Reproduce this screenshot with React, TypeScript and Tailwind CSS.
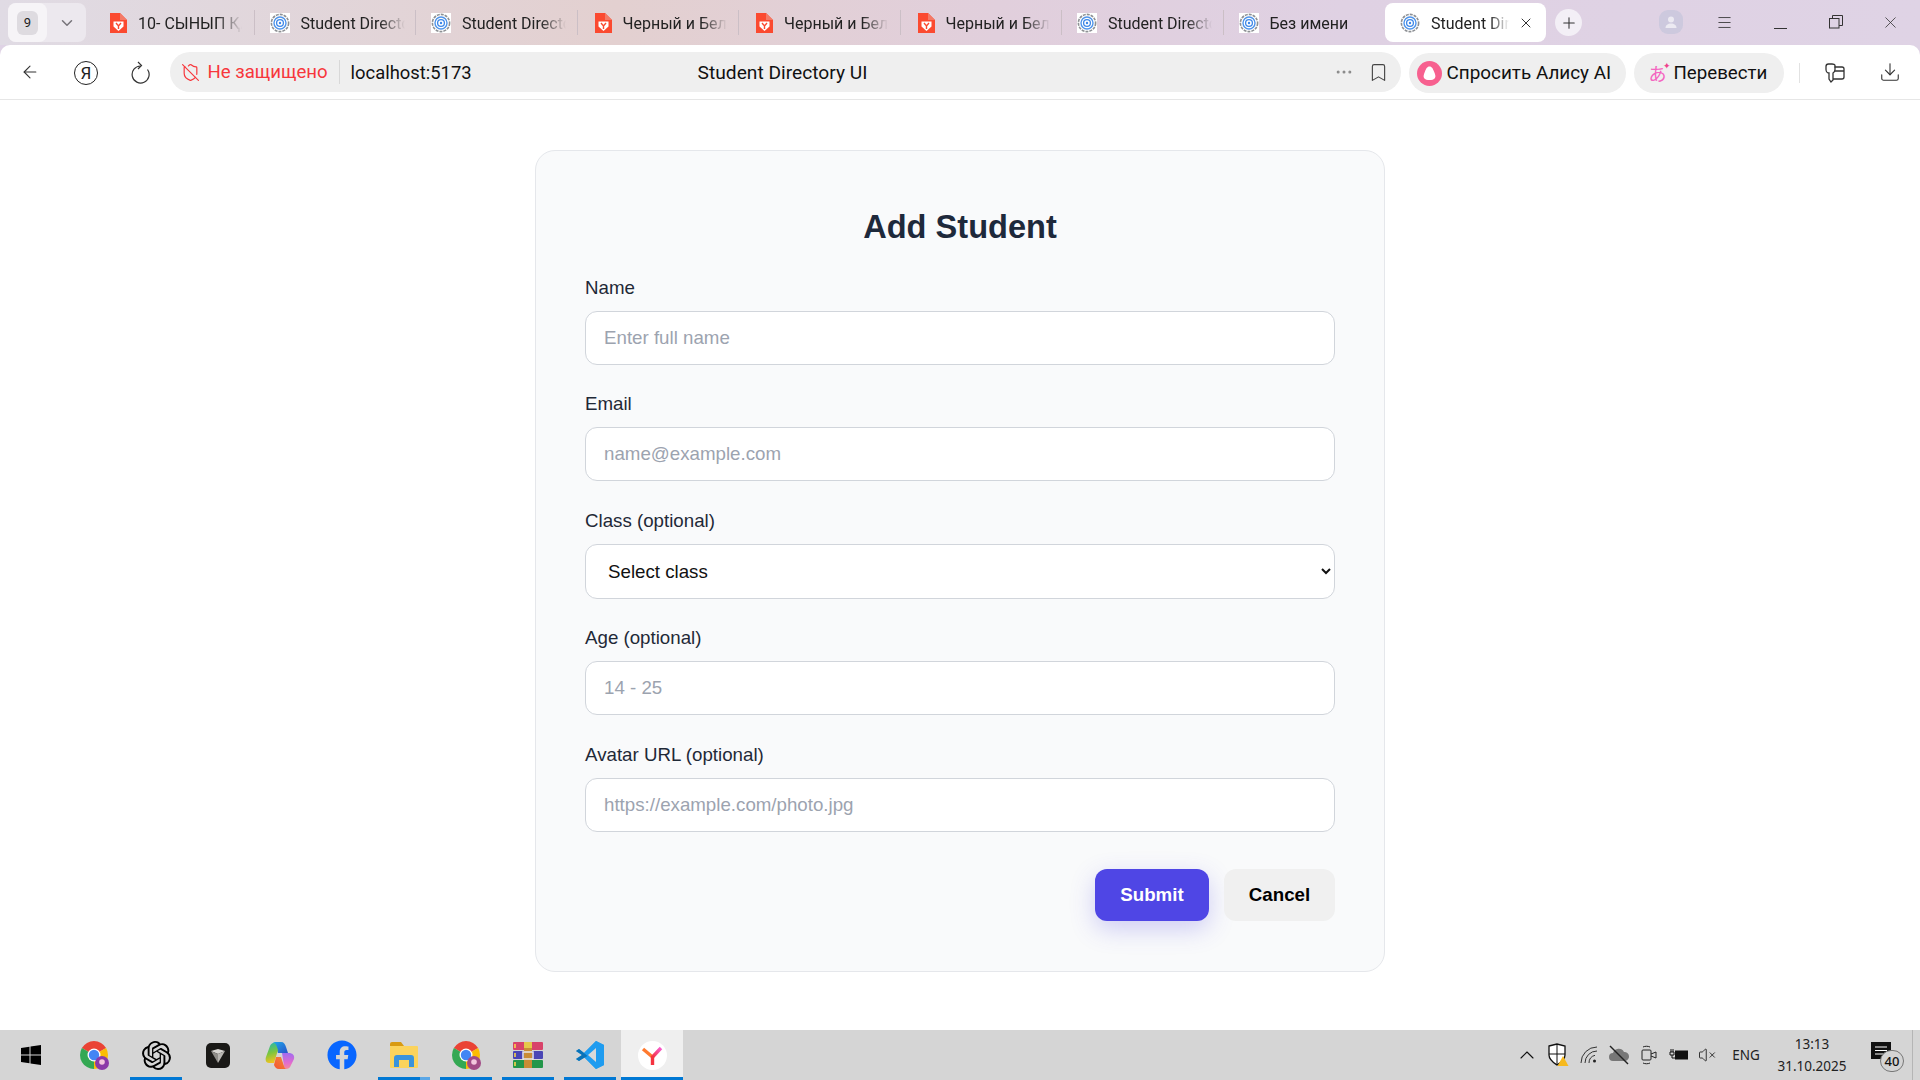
import React from "react";
import {
  ArrowLeft,
  Bookmark,
  ChevronDown,
  ChevronUp,
  Download,
  Menu,
  MoreHorizontal,
  Plus,
  ShieldOff,
  VolumeX,
  X,
} from "lucide-react";
import { FaFacebook } from "react-icons/fa";
import { SiOpenai } from "react-icons/si";

const DocIcon = () => (
  <svg width="17" height="20" viewBox="0 0 17 20" className="ml-px mr-px shrink-0">
    <path d="M0 0h10l7 7v13H0z" fill="#fb4a30" />
    <path d="M10 0l7 7h-7z" fill="#f47a66" />
    <path d="M3.500 8.500h10v5L8.500 18l-5-4.500z" fill="#fff" />
    <path d="M6 10l2.500 3 2.500-3M8.500 13v3" stroke="#fb4a30" strokeWidth="1.400" fill="none" />
  </svg>
);

const AppIcon = () => (
  <svg width="20" height="20" viewBox="0 0 20 20" className="-ml-px mr-px shrink-0">
    <rect width="20" height="20" fill="#fff" />
    <circle cx="10" cy="10" r="8.600" fill="none" stroke="#8d9094" strokeWidth="1.600" strokeDasharray="3 1" />
    <circle cx="10" cy="10" r="6" fill="none" stroke="#4f94ea" strokeWidth="1.400" />
    <circle cx="10" cy="10" r="3.400" fill="none" stroke="#3d87e8" strokeWidth="1.300" />
    <circle cx="10" cy="10" r="1.200" fill="#3d87e8" />
  </svg>
);

const tabs = [
  { title: "10- СЫНЫП ҚАЗАҚ", doc: true },
  { title: "Student Directory UI", doc: false },
  { title: "Student Directory UI", doc: false },
  { title: "Черный и Белый", doc: true },
  { title: "Черный и Белый", doc: true },
  { title: "Черный и Белый", doc: true },
  { title: "Student Directory UI", doc: false },
  { title: "Без имени", doc: false },
];

const TabStrip = () => (
  <div className="flex h-[45px] items-start bg-[linear-gradient(90deg,#e0dbe4_0%,#e3d0d0_32%,#e1cfdc_52%,#dfd1e3_70%,#dfd3e5_100%)]">
    <div className="ml-2 mt-[3px] flex h-[39px] w-[78px] rounded-lg bg-[#ece8ee]">
      <div className="flex w-[39px] items-center justify-center rounded-lg bg-[#f6f4f7]">
        <span className="flex h-[24px] w-[21px] items-center justify-center rounded-md bg-[#dedbe0] text-[13px] text-[#222]">9</span>
      </div>
      <div className="flex flex-1 items-center justify-center text-[#77747a]">
        <ChevronDown size={18} />
      </div>
    </div>
    <div className="ml-[7px] flex">
      {tabs.map((tab, i) => (
        <div
          key={i}
          className={
            "mt-[10px] flex h-[25px] w-[161.5px] items-center gap-[10px] border-r pl-[16px] text-[16px] text-[#222] " +
            (i === 7 ? "border-transparent" : "border-[#cbbfc6]")
          }
        >
          {tab.doc ? <DocIcon /> : <AppIcon />}
          <span className="w-[104px] translate-y-[1px] overflow-hidden whitespace-nowrap [mask-image:linear-gradient(90deg,#000_75%,transparent)]">
            {tab.title}
          </span>
        </div>
      ))}
    </div>
    <div className="mt-[3px] flex h-[39px] w-[161px] items-center rounded-lg bg-white pl-[16px] text-[16px] text-[#222]">
      <AppIcon />
      <span className="ml-[10px] w-[78px] translate-y-[1px] overflow-hidden whitespace-nowrap [mask-image:linear-gradient(90deg,#000_75%,transparent)]">
        Student Directory UI
      </span>
      <X size={16} strokeWidth={1.4} className="ml-[9px]" />
    </div>
    <div className="ml-[9px] mt-[9px] flex h-[27px] w-[27px] items-center justify-center rounded-full bg-[#f3eff6] text-[#333]">
      <Plus size={18} strokeWidth={1.4} />
    </div>
    <div className="ml-[77px] mt-[10px] flex h-[24px] w-[24px] items-center justify-center rounded-[9px] bg-[#cdc9de]">
      <svg width="14" height="14" viewBox="0 0 14 14" fill="#eceaf2">
        <circle cx="7" cy="4.500" r="3" />
        <path d="M1.500 13c0-3 2.500-4.500 5.500-4.500s5.500 1.500 5.500 4.500z" />
      </svg>
    </div>
    <div className="ml-[31px] mt-[12px] flex h-[20px] w-[20px] items-center justify-center text-[#333]">
      <Menu size={17} strokeWidth={1.2} />
    </div>
    <div className="ml-[35px] mt-[12px] flex h-[20px] w-[22px] items-end justify-center">
      <span className="mb-[3px] h-px w-[13px] bg-[#333]" />
    </div>
    <div className="ml-[38px] mt-[15px] flex h-[14px] w-[14px] items-center justify-center">
      <svg width="14" height="14" viewBox="0 0 14 14" fill="none" stroke="#333" strokeWidth="1">
        <rect x="0.500" y="3.500" width="9.500" height="9.500" />
        <path d="M3.500 3.500V0.500h10v10h-3.500" />
      </svg>
    </div>
    <div className="ml-[37px] mt-[12px] flex h-[20px] w-[20px] items-center justify-center text-[#333]">
      <X size={19} strokeWidth={1} />
    </div>
  </div>
);

const Toolbar = () => (
  <div className="flex h-[55px] items-start rounded-t-[10px] border-b border-[#e6e6e6] bg-white">
    <div className="ml-[20px] mt-[17px] text-[#333]">
      <ArrowLeft size={20} strokeWidth={1.3} />
    </div>
    <div className="ml-[34px] mt-[16px] flex h-[24px] w-[24px] items-center justify-center rounded-full border border-[#222] text-[17px] leading-none text-[#222]">
      Я
    </div>
    <div className="ml-[32px] mt-[16px]">
      <svg width="21" height="23" viewBox="0 0 21 23" fill="none" stroke="#333" strokeWidth="1.200">
        <path d="M17.500 8.500A8.500 8.500 0 1 1 10.500 5" />
        <path d="M8 1l3.500 3.500L8 8" />
      </svg>
    </div>
    <div className="ml-[18.5px] mt-[7px] flex h-[40px] w-[1231px] items-center rounded-full bg-[#efefef] pl-[11px] pr-[12px] text-[#111]">
      <ShieldOff size={19} strokeWidth={1.5} className="text-[#f7373c]" />
      <span className="ml-[8px] translate-y-[1px] text-[18.6px] text-[#f7373c]">Не защищено</span>
      <span className="ml-[11px] h-[24px] w-px bg-[#d8d8d8]" />
      <span className="ml-[11px] translate-y-[1px] text-[18.4px]">localhost:5173</span>
      <span className="ml-[226px] translate-y-[1px] text-[19.2px]">Student Directory UI</span>
      <MoreHorizontal size={20} strokeWidth={1.6} className="ml-auto text-[#8a8a8a]" />
      <Bookmark size={21} strokeWidth={1.3} className="ml-[14px] text-[#444]" />
    </div>
    <div className="ml-[8px] mt-[8px] flex h-[40px] w-[217px] items-center rounded-full bg-[#efefef] pl-[8px] text-[18.9px] text-[#111]">
      <svg width="25" height="25" viewBox="0 0 25 25" className="shrink-0">
        <circle cx="12.500" cy="12.500" r="12.500" fill="#f7608f" />
        <path d="M12.500 5.500c2.500 0 3.500 2.500 4.500 5 1 2.500 2 4.500 1 6.500-1 1.800-3.500 2-5.500 2s-4.500-.2-5.500-2c-1-2 0-4 1-6.500 1-2.500 2-5 4.500-5z" fill="#fff" />
      </svg>
      <span className="ml-[5px] whitespace-nowrap">Спросить Алису AI</span>
    </div>
    <div className="ml-[8px] mt-[8px] flex h-[40px] w-[150px] items-center rounded-full bg-[#efefef] pl-[15px] text-[18.7px] text-[#111]">
      <span className="relative text-[18px] leading-none text-[#f464c0] [font-family:'Noto_Sans_CJK_JP',sans-serif]">
        あ
        <span className="absolute -right-[4px] -top-[3px] text-[9px] text-[#f0408c]">✦</span>
      </span>
      <span className="ml-[7px]">Перевести</span>
    </div>
    <div className="ml-[15px] mt-[18px] h-[20px] w-px bg-[#e2e2e2]" />
    <div className="ml-[23px] mt-[16px]">
      <svg width="24" height="24" viewBox="0 0 24 24" fill="none" stroke="#333" strokeWidth="1.300">
        <path d="M9 3H5.500C4 3 3 4 3 5.500v3C3 11 5 12 6 12v6l2 3 2-2v-7c.5-.3 2-1.500 2-3.500v-4C12 3.500 10.500 3 9 3z" />
        <path d="M11.500 6H19c1.500 0 2 1 2 2v8c0 1-.5 2-2 2h-9M12 10h9" />
      </svg>
    </div>
    <div className="ml-[32px] mt-[16px] text-[#333]">
      <Download size={22} strokeWidth={1.2} />
    </div>
  </div>
);

const inputClass =
  "h-[54px] w-full rounded-xl border-[1.5px] border-[#d1d5db] bg-white px-[18px] text-[18.72px] text-[#111] outline-none placeholder:text-[#9ca3af]";

const Field = ({ label, children }: { label: string; children: React.ReactNode }) => (
  <div className="mb-[25.6px]">
    <label className="mb-[10px] block text-[18.72px] leading-[27px] text-[#1f2937]">{label}</label>
    {children}
  </div>
);

const StudentForm = () => (
  <form className="h-fit w-[850px] rounded-[20px] border-[1.5px] border-[#e5e7eb] bg-[#f9fafb] px-[49px] pb-[50px] pt-[51px]">
    <h2 className="mb-[21.5px] text-center text-[32.6px] font-bold leading-[50px] text-[#1e293b]">Add Student</h2>
    <Field label="Name">
      <input className={inputClass} placeholder="Enter full name" />
    </Field>
    <Field label="Email">
      <input className={inputClass} placeholder="name@example.com" />
    </Field>
    <Field label="Class (optional)">
      <select className="h-[55px] w-full rounded-xl border-[1.5px] border-[#d1d5db] bg-white px-[18px] text-[18.72px] text-[#111] outline-none" defaultValue="">
        <option value="">Select class</option>
        <option value="10A">10A</option>
      </select>
    </Field>
    <Field label="Age (optional)">
      <input className={inputClass} placeholder="14 - 25" />
    </Field>
    <Field label="Avatar URL (optional)">
      <input className={inputClass} placeholder="https://example.com/photo.jpg" />
    </Field>
    <div className="mt-[37.5px] flex justify-end gap-[15px]">
      <button type="button" className="h-[52px] w-[114px] rounded-xl bg-[#4f46e5] text-[18.72px] font-bold text-white shadow-[0_8px_24px_rgba(79,70,229,0.25)]">
        Submit
      </button>
      <button type="button" className="h-[52px] w-[111px] rounded-xl bg-[#f0f0f0] text-[18.72px] font-bold text-black">
        Cancel
      </button>
    </div>
  </form>
);

const ChromeIcon = ({ badge }: { badge: string }) => (
  <svg width="30" height="30" viewBox="0 0 30 30">
    <path d="M15 15L2.880 8A14 14 0 0 1 27.120 8z" fill="#ea4335" />
    <path d="M15 15L27.120 8A14 14 0 0 1 15 29z" fill="#fbbc04" />
    <path d="M15 15L15 29A14 14 0 0 1 2.880 8z" fill="#34a853" />
    <circle cx="15" cy="15" r="6.500" fill="#fff" />
    <circle cx="15" cy="15" r="5.200" fill="#4285f4" />
    <circle cx="23" cy="23" r="7" fill={badge} />
    <circle cx="23" cy="22" r="2.800" fill="#f3c6dd" />
  </svg>
);

const taskbarIcons: { icon: React.ReactNode; line?: boolean; extra?: boolean; active?: boolean }[] = [
  {
    icon: (
      <svg width="20" height="20" viewBox="0 0 20 20" fill="#000" className="-translate-x-[1px]">
        <path d="M0 3l8.500-1.200V9.500H0zM9.500 1.600L20 0v9.500H9.500zM0 10.500h8.500v7.700L0 17zM9.500 10.500H20V20l-10.500-1.500z" />
      </svg>
    ),
  },
  { icon: <ChromeIcon badge="#8b3aa8" /> },
  { icon: <SiOpenai size={29} color="#000" />, line: true },
  {
    icon: (
      <svg width="24" height="25" viewBox="0 0 24 25">
        <rect width="24" height="25" rx="5" fill="#1a1917" />
        <path d="M5 8l7-2 7 2-7 3z" fill="#d8d6d2" />
        <path d="M5 8l7 3v9z" fill="#8f8d89" />
        <path d="M19 8l-7 3v9z" fill="#b8b6b2" />
      </svg>
    ),
  },
  {
    icon: (
      <svg width="30" height="29" viewBox="0 0 30 29">
        <defs>
          <linearGradient id="cpa" x1="0" y1="0" x2="1" y2="1">
            <stop offset="0" stopColor="#1fa8ea" />
            <stop offset="1" stopColor="#2a52c9" />
          </linearGradient>
          <linearGradient id="cpb" x1="0.300" y1="0" x2="0.500" y2="1">
            <stop offset="0" stopColor="#2ab8a8" />
            <stop offset="0.500" stopColor="#7cc63e" />
            <stop offset="1" stopColor="#f6c31d" />
          </linearGradient>
          <linearGradient id="cpc" x1="0" y1="1" x2="1" y2="0">
            <stop offset="0" stopColor="#f5562f" />
            <stop offset="1" stopColor="#f28a3c" />
          </linearGradient>
          <linearGradient id="cpd" x1="0.500" y1="0" x2="0.500" y2="1">
            <stop offset="0" stopColor="#a06cf0" />
            <stop offset="0.600" stopColor="#e06bd0" />
            <stop offset="1" stopColor="#f58a9a" />
          </linearGradient>
        </defs>
        <path d="M10 1h6c3 0 4 2 5 5l2 6H13l-2-6c-.7-2-1.500-4-3-4.500z" fill="url(#cpa)" />
        <path d="M8 2c2-.5 3 1 4 4l1 3-4 13H4c-3 0-4-3-3-6l4-11c.5-1.500 1.500-2.500 3-3z" fill="url(#cpb)" />
        <path d="M17 12h7c3 0 6 2 5 6l-3 6c-1 3-3 4-5 4-1 0-2-1-2-3z" fill="url(#cpd)" />
        <path d="M11 16h5l3 9c.5 2 1.500 3 2.500 3H14c-3 0-4-2-5-4z" fill="url(#cpc)" />
      </svg>
    ),
  },
  { icon: <FaFacebook size={30} color="#0866ff" /> },
  {
    icon: (
      <svg width="28" height="26" viewBox="0 0 28 26">
        <path d="M0 2a2 2 0 0 1 2-2h9l3 4H0z" fill="#d89a12" />
        <rect y="4" width="28" height="22" rx="1" fill="#fbd35c" />
        <path d="M4 25v-9a3 3 0 0 1 3-3h14a3 3 0 0 1 3 3v9h-5v-7h-10v7z" fill="#3a93dc" />
      </svg>
    ),
    line: true,
    extra: true,
  },
  { icon: <ChromeIcon badge="#a24a86" />, line: true },
  {
    icon: (
      <svg width="30" height="26" viewBox="0 0 30 26">
        <rect y="0" width="30" height="8" rx="1" fill="#d8436a" />
        <rect y="9" width="30" height="8" rx="1" fill="#4a46b5" />
        <rect y="18" width="30" height="8" rx="1" fill="#23964a" />
        <rect x="11" y="0" width="8" height="26" fill="#c98c36" />
        <rect x="11" y="0" width="8" height="6" fill="#e5c84a" />
        <rect x="10" y="10" width="10" height="7" fill="none" stroke="#e8e8e8" strokeWidth="1.500" />
        <path d="M2 2v4M2 11v4M2 20v4" stroke="#f8d54a" strokeWidth="1.600" />
      </svg>
    ),
    line: true,
  },
  {
    icon: (
      <svg width="30" height="30" viewBox="0 0 30 30">
        <path d="M21 1l8 4v20l-8 4L9 17l-5 4-3-2 6-4-6-4 3-2 5 4z" fill="#2b9de0" />
        <path d="M21 1L7 15l14 14 8-4V5z" fill="#1f9cf0" />
        <path d="M21 8l-8 7 8 7z" fill="#d9d9d9" />
        <path d="M1 11l3-2 5 4 3.500 3-3.500 2-5 3-3-2 6-4z" fill="#0a72b8" />
      </svg>
    ),
    line: true,
  },
  {
    icon: (
      <svg width="29" height="29" viewBox="0 0 29 29">
        <defs>
          <linearGradient id="yr" x1="1" y1="0" x2="0" y2="1">
            <stop offset="0" stopColor="#f75cd0" />
            <stop offset="1" stopColor="#f5333f" />
          </linearGradient>
        </defs>
        <circle cx="14.500" cy="14.500" r="14.500" fill="#fff" />
        <path d="M5 8l9.500 8" stroke="#ff7a2f" strokeWidth="3.400" fill="none" />
        <path d="M23 7l-8.500 9" stroke="url(#yr)" strokeWidth="3.400" fill="none" />
        <path d="M14.500 15v9" stroke="#f5333f" strokeWidth="3.400" fill="none" />
      </svg>
    ),
    line: true,
    active: true,
  },
];

const TrayIcons = () => (
  <div className="flex h-full items-center text-[#111]">
    <div className="flex w-[30px] justify-center"><ChevronUp size={24} strokeWidth={1.1} /></div>
    <div className="flex w-[31px] justify-center">
      <svg width="22" height="24" viewBox="0 0 22 24">
        <path d="M2 3l8-2 8 2v9c0 5-5 8-8 10-3-2-8-5-8-10z" fill="#fff" stroke="#111" strokeWidth="1.300" />
        <path d="M10 1v21M2 11h16" stroke="#111" strokeWidth="1" />
        <path d="M16 13l5.500 10h-11z" fill="#f6b91e" />
      </svg>
    </div>
    <div className="flex w-[31px] justify-center">
      <svg width="18" height="18" viewBox="0 0 18 18" fill="none" stroke="#333" strokeWidth="1">
        <path d="M1 17A16 16 0 0 1 17 1M5 17A12 12 0 0 1 17 5M9 17a8 8 0 0 1 6-7.700" />
        <circle cx="14.500" cy="15" r="1.500" fill="#222" stroke="none" />
      </svg>
    </div>
    <div className="flex w-[29px] justify-center">
      <svg width="22" height="20" viewBox="0 0 22 20">
        <path d="M5 16a4 4 0 0 1 0-8 6 6 0 0 1 11-1 4.500 4.500 0 0 1 1 9z" fill="#777" />
        <path d="M2 1l18 18" stroke="#222" strokeWidth="1.500" />
      </svg>
    </div>
    <div className="flex w-[31px] justify-center">
      <svg width="16" height="20" viewBox="0 0 16 20" fill="none" stroke="#222" strokeWidth="1">
        <rect x="1" y="5" width="9" height="10" rx="1" />
        <path d="M10 9l5-2v6l-5-2M2 2c2-1 5-1 7 0M2 18c2 1 5 1 7 0" />
      </svg>
    </div>
    <div className="flex w-[29px] justify-center">
      <svg width="20" height="14" viewBox="0 0 20 14">
        <path d="M2 1v3M4 1v3M1 4h4v3H1zM3 7v3h3" stroke="#111" strokeWidth="1" fill="none" />
        <rect x="6" y="2.500" width="13" height="9" fill="#111" />
      </svg>
    </div>
    <div className="flex w-[28px] justify-center"><VolumeX size={18} strokeWidth={1.1} /></div>
    <span className="ml-[5px] w-[40px] text-center text-[13.5px] text-[#222]">ENG</span>
    <div className="ml-[1px] flex w-[90px] flex-col items-center text-[13.5px] leading-[22px] text-[#222]">
      <span>13:13</span>
      <span>31.10.2025</span>
    </div>
    <div className="relative ml-[10px] h-[30px] w-[38px]">
      <svg width="22" height="19" viewBox="0 0 22 19" className="absolute left-[4px] top-[2px]">
        <path d="M0 0h20v17H0z" fill="#111" />
        <path d="M4 5h12M4 8.500h12M4 12h8" stroke="#fff" strokeWidth="1" />
      </svg>
      <span className="absolute left-[13px] top-[10px] flex h-[22px] w-[24px] items-center justify-center rounded-full border border-[#777] bg-[#d4d4d4] text-[13px] font-medium leading-none text-[#111]">
        40
      </span>
    </div>
    <div className="ml-[7px] h-full w-px bg-[#b5b5b5]" />
    <div className="w-[7px]" />
  </div>
);

const Taskbar = () => (
  <div className="flex h-[50px] items-stretch justify-between bg-[#d5d5d5] pl-px">
    <div className="flex">
      {taskbarIcons.map((item, i) => (
        <div
          key={i}
          className={
            "relative flex w-[62px] items-center justify-center " + (item.active ? "bg-[#efefef]" : "")
          }
        >
          {item.icon}
          {item.line && (
            <span
              className={
                "absolute bottom-0 h-[3px] bg-[#0078d4] " + (item.active ? "inset-x-0" : "inset-x-[5px]")
              }
            />
          )}
          {item.extra && <span className="absolute bottom-0 right-[5px] h-[3px] w-[10px] bg-[#5ba7e6]" />}
        </div>
      ))}
    </div>
    <TrayIcons />
  </div>
);

export default function App() {
  return (
    <div className="flex h-screen flex-col overflow-hidden bg-white [font-family:'Liberation_Sans',Arial,sans-serif]">
      <div className="[font-family:Roboto,'Noto_Sans',sans-serif]">
        <TabStrip />
        <div className="bg-[#dfd3e5]">
          <Toolbar />
        </div>
      </div>
      <main className="flex flex-1 justify-center pt-[50px]">
        <StudentForm />
      </main>
      <div className="[font-family:'Noto_Sans',sans-serif]">
        <Taskbar />
      </div>
    </div>
  );
}
